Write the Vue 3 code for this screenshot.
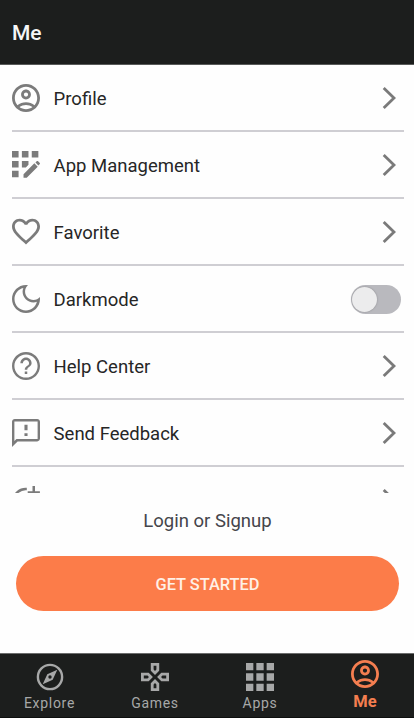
<script setup>
import { ref } from 'vue'

const account = 'M12 2C6.48 2 2 6.48 2 12s4.48 10 10 10 10-4.48 10-10S17.52 2 12 2M7.35 18.5C8.66 17.56 10.26 17 12 17s3.34.56 4.65 1.5c-1.31.94-2.91 1.5-4.65 1.5s-3.34-.56-4.65-1.5m10.79-1.38C16.45 15.8 14.32 15 12 15s-4.45.8-6.14 2.12C4.7 15.73 4 13.95 4 12c0-4.42 3.58-8 8-8s8 3.58 8 8c0 1.95-.7 3.73-1.86 5.12M12 6c-1.93 0-3.5 1.57-3.5 3.5S10.07 13 12 13s3.5-1.57 3.5-3.5S13.93 6 12 6m0 5c-.83 0-1.5-.67-1.5-1.5S11.17 8 12 8s1.5.67 1.5 1.5S12.83 11 12 11'

const rows = [
  { label: 'Profile', box: '2 2 20 20', d: account },
  { label: 'App Management', box: '4 4 17 17', d: 'M10 4h4v4h-4zM4 16h4v4H4zM4 10h4v4H4zM4 4h4v4H4zM14 12.42V10h-4v4h2.42zM20.88 11.29l-1.17-1.17c-.16-.16-.42-.16-.58 0l-.88.88L20 12.75l.88-.88c.16-.16.16-.42 0-.58zM11 18.1V20.200h1.950l6.67-6.67-2.050-2.050zM16 4h4v4h-4z' },
  { label: 'Favorite', box: '2 2.5 20 20', d: 'M16.5 3c-1.74 0-3.41.81-4.5 2.09C10.91 3.81 9.24 3 7.5 3 4.42 3 2 5.42 2 8.5c0 3.78 3.4 6.86 8.55 11.54L12 21.35l1.45-1.32C18.6 15.36 22 12.28 22 8.5 22 5.42 19.58 3 16.5 3zm-4.4 15.55l-.1.1-.1-.1C7.14 14.24 4 11.39 4 8.5 4 6.5 5.5 5 7.5 5c1.54 0 3.04.99 3.57 2.36h1.87C13.46 5.99 14.96 5 16.5 5c2 0 3.5 1.5 3.5 3.5 0 2.89-3.14 5.74-7.9 10.05z' },
  { label: 'Darkmode', toggle: true, box: '3 3 18 18', d: 'M10.300 4.900C10 5.700 9.800 6.400 9.800 7.200c0 3.900 3.100 7 7 7 .8 0 1.500-.1 2.200-.4C18.200 17 15.400 19.400 12 19.400c-4.100 0-7.400-3.300-7.400-7.400 0-3.500 2.400-6.400 5.700-7.100zM12 3c-4.970 0-9 4.030-9 9s4.030 9 9 9 9-4.030 9-9c0-.46-.04-.92-.1-1.360-.98 1.200-2.400 1.960-4.100 1.960-2.980 0-5.400-2.420-5.400-5.400 0-1.600.700-3.100 1.860-4.100C12.920 3.040 12.460 3 12 3z' },
  { label: 'Help Center', box: '2 2 20 20', d: 'M11.100 17.700h1.800v-1.800h-1.800zM12 2C6.480 2 2 6.480 2 12s4.480 10 10 10 10-4.480 10-10S17.520 2 12 2zm0 18.300c-4.580 0-8.300-3.720-8.300-8.300s3.720-8.300 8.300-8.300 8.300 3.720 8.300 8.300-3.720 8.300-8.300 8.300zm0-14.300c-2.210 0-4 1.790-4 4h1.800c0-1.200 1-2.200 2.200-2.200s2.200 1 2.200 2.200c0 2-3.100 1.750-3.100 4.700h1.800c0-2 3.100-2.500 3.100-4.700 0-2.210-1.790-4-4-4z' },
  { label: 'Send Feedback', box: '2 2 20 20', d: 'M20 2H4c-1.1 0-1.99.9-1.99 2L2 22l4-4h14c1.1 0 2-.9 2-2V4c0-1.1-.9-2-2-2zm0 14.300H5.170l-.7.7-.77.76V3.700h16.600v12.600zm-9.100-4.200h2.200v2h-2.200v-2zm0-6h2.200v4h-2.200z' },
  { label: '', box: '0 0 28 28', d: 'M14.8 1.7V4.3A10.8 10.8 0 1 0 24.5 15H27A13.3 13.3 0 1 1 14.8 1.7zM20.500 0h2.500v5.200h4.900v2.300h-4.900v4.900h-2.500V7.500H15.700V5.200h4.800z' },
]

const tabs = [
  { label: 'Explore', name: 'explore' },
  { label: 'Games', name: 'games' },
  { label: 'Apps', name: 'apps' },
  { label: 'Me', name: 'me' },
]
const active = ref('me')
const dark = ref(false)
</script>

<template>
  <div class="screen">
    <header class="bar"><h1>Me</h1></header>
    <ul class="list">
      <li v-for="(r, i) in rows" :key="i" class="row">
        <svg class="icon" :viewBox="r.box"><path :d="r.d" /></svg>
        <span class="label">{{ r.label }}</span>
        <button v-if="r.toggle" class="switch" :class="{ on: dark }" @click="dark = !dark"><i class="knob"></i></button>
        <svg v-else class="chevron" viewBox="0 0 14 24"><path d="M1.700 1.900 12 12 1.700 22.100" /></svg>
      </li>
    </ul>
    <section class="auth">
      <p>Login or Signup</p>
      <button class="cta">GET STARTED</button>
    </section>
    <nav class="tabs">
      <button v-for="t in tabs" :key="t.name" class="tab" :class="{ active: active === t.name }" @click="active = t.name">
        <svg v-if="t.name === 'explore'" class="glyph" viewBox="0 0 28 28">
          <circle cx="14" cy="14" r="12.1" fill="none" stroke="currentColor" stroke-width="2.4" />
          <path fill-rule="evenodd" d="M21.3 6.7 16.7 16.7 6.7 21.3 11.3 11.3zM14 12.3a1.7 1.7 0 1 0 0 3.4 1.7 1.7 0 0 0 0-3.4z" />
        </svg>
        <svg v-else-if="t.name === 'games'" class="glyph" viewBox="2 2 20 20">
          <path d="M13 4v2.67l-1 1-1-1V4h2m7 7v2h-2.67l-1-1 1-1H20M6.67 11l1 1-1 1H4v-2h2.67M12 16.33l1 1V20h-2v-2.67l1-1M15 2H9v5.5l3 3 3-3V2zm7 7h-5.5l-3 3 3 3H22V9zM7.5 9H2v6h5.5l3-3-3-3zM12 13.5l-3 3V22h6v-5.5l-3-3z" />
        </svg>
        <svg v-else-if="t.name === 'apps'" class="glyph" viewBox="4 4 16 16">
          <path d="M4 4h4.2v4.2H4zM9.9 4h4.2v4.2H9.9zM15.8 4H20v4.2h-4.2zM4 9.9h4.2v4.2H4zM9.9 9.9h4.2v4.2H9.9zM15.8 9.9H20v4.2h-4.2zM4 15.8h4.2V20H4zM9.9 15.8h4.2V20H9.9zM15.8 15.8H20V20h-4.2z" />
        </svg>
        <svg v-else class="glyph" viewBox="2 2 20 20"><path :d="account" /></svg>
        <span>{{ t.label }}</span>
      </button>
    </nav>
  </div>
</template>

<style>
body { background: #fefefe; }
</style>

<style scoped>
* { box-sizing: border-box; }
.screen {
  width: 414px;
  height: 718px;
  display: flex;
  flex-direction: column;
  background: #fefefe;
  font-family: Roboto, "Liberation Sans", sans-serif;
  overflow: hidden;
}
button { border: 0; padding: 0; background: none; font-family: inherit; }
.bar {
  flex: none;
  height: 65px;
  padding: 1px 0 0 12px;
  display: flex;
  align-items: center;
  background: #1c1e1d;
  border-bottom: 1px solid #585a59;
}
h1 { margin: 0; font-size: 21px; font-weight: 500; line-height: 24px; letter-spacing: 0; color: #f6f6f6; }
.list {
  flex: none;
  height: 428px;
  margin: 0;
  padding: 0 10px 0 11.6px;
  overflow: hidden;
  list-style: none;
}
.row {
  height: 67px;
  display: flex;
  align-items: center;
  border-bottom: 2px solid #cfced3;
}
.icon { width: 28px; height: 28px; flex: none; fill: #7b7b7b; }
.label { flex: 1; margin-left: 14px; padding-top: 2px; font-size: 18.500px; line-height: 24px; color: #262626; }
.chevron { width: 14px; height: 24px; margin-right: 7.600px; fill: none; stroke: #7a7a7a; stroke-width: 2.8; }
.switch {
  width: 50px;
  height: 29px;
  margin: 2px 3px 0 0;
  padding: 2px 1px;
  border-radius: 15px;
  background: #b9b9be;
  display: flex;
}
.switch.on { justify-content: flex-end; background: #fc7c49; }
.knob { width: 25px; height: 25px; border-radius: 50%; background: #ececed; box-shadow: 0 0 2px #88888c; }
.auth {
  flex: 1;
  display: flex;
  flex-direction: column;
  align-items: center;
  padding: 16px 15px 0 16px;
}
.auth p { margin: 0 0 23px; font-size: 18.500px; line-height: 24px; color: #45454b; }
.cta {
  width: 100%;
  height: 55px;
  padding-top: 2px;
  border-radius: 28px;
  background: #fc7c49;
  color: #fff0e6;
  font-size: 16.400px;
  font-weight: 500;
}
.tabs {
  flex: none;
  height: 65px;
  display: grid;
  grid-template-columns: 99px 112px 98px 112px;
  background: #1c1e1d;
  border-top: 1px solid #6b6c6c;
  border-bottom: 1px solid #0d0f0e;
}
.tab { display: flex; flex-direction: column; align-items: center; padding-top: 9px; color: #a7a8a8; }
.glyph { width: 28px; height: 28px; fill: currentColor; }
.tab span { margin-top: 3px; font-size: 14px; line-height: 18px; letter-spacing: 0.7px; }
.tab.active { padding-top: 6px; color: #f47e50; }
.tab.active span { font-size: 16.500px; font-weight: 700; margin-top: 5px; letter-spacing: 0; }
</style>
